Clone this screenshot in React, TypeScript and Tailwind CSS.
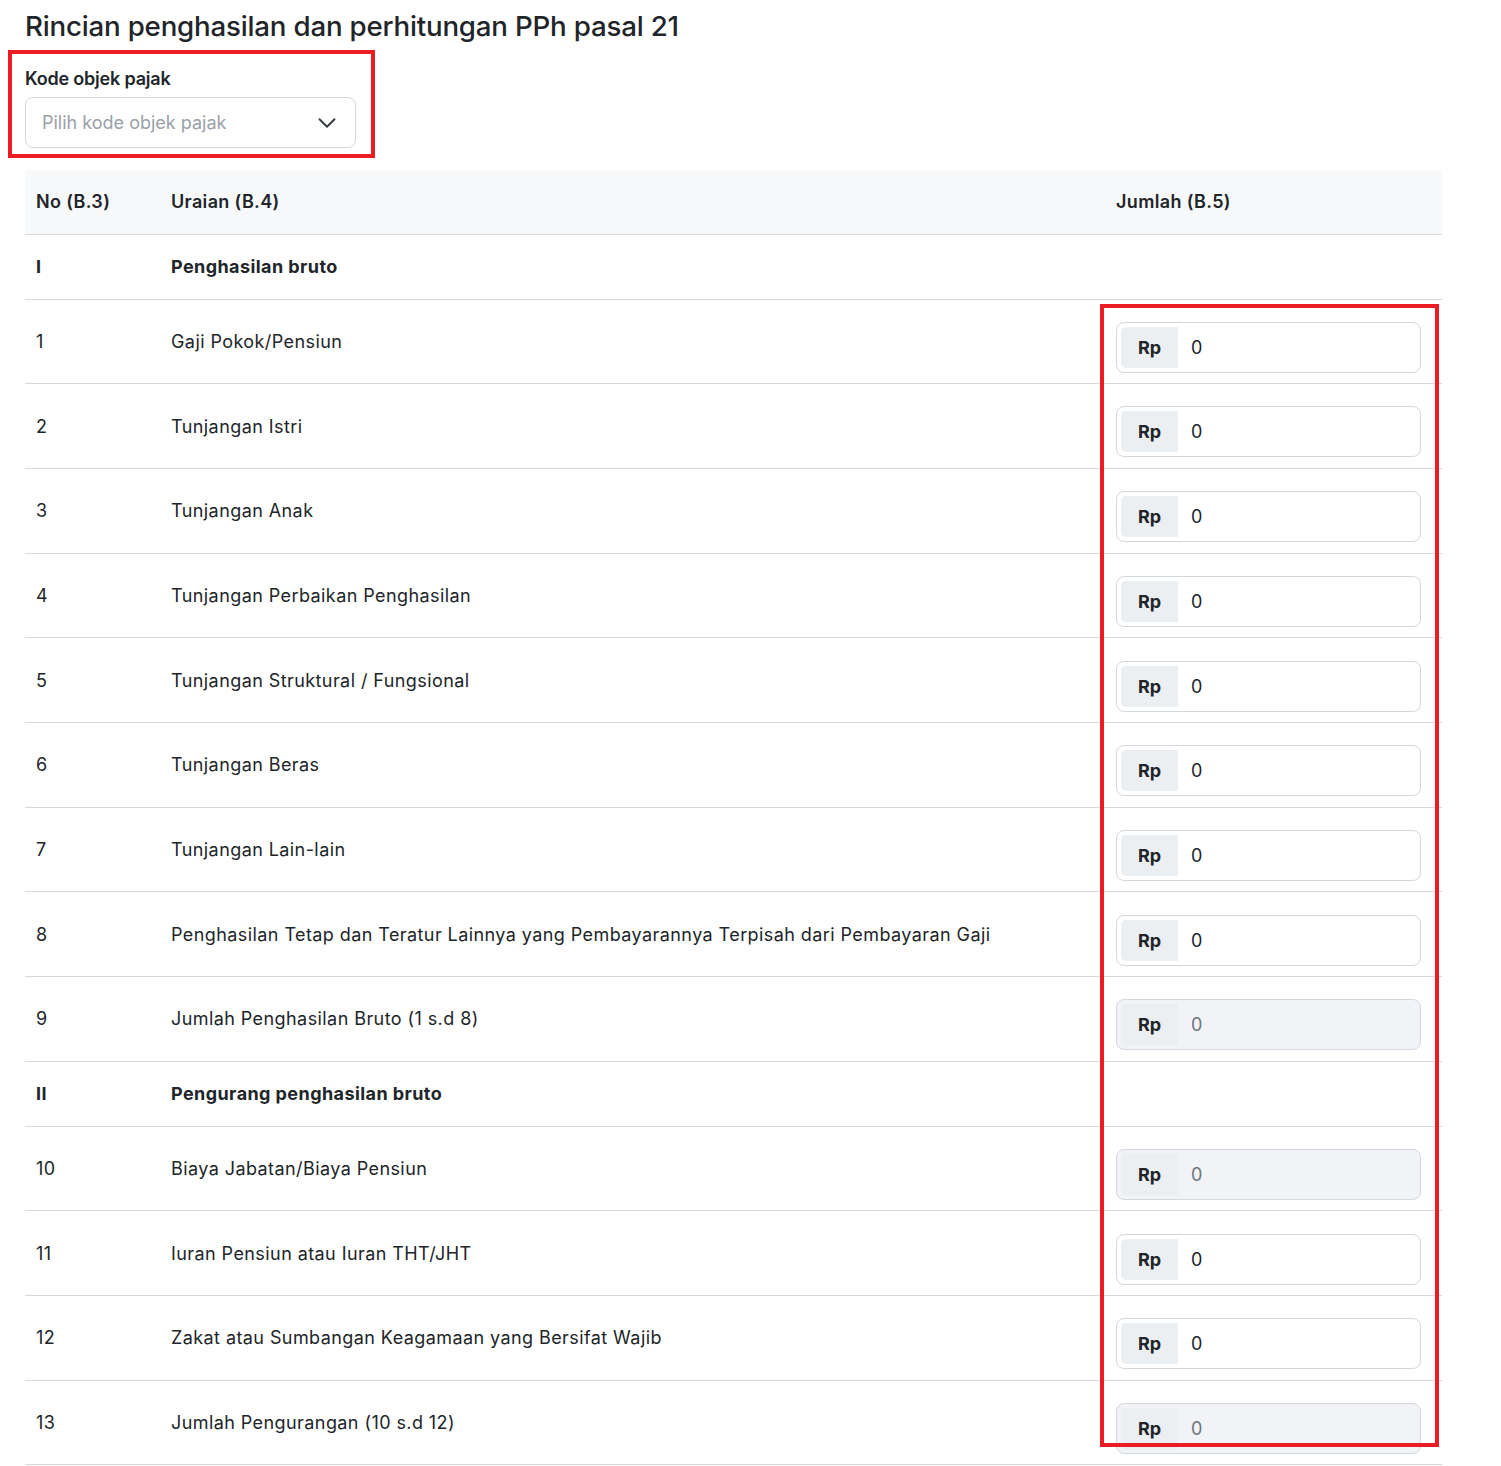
import { ChevronDown } from "lucide-react";

type Row =
  | { kind: "section"; no: string; label: string }
  | { kind: "item"; no: string; label: string; disabled?: boolean };

const rows: Row[] = [
  { kind: "section", no: "I", label: "Penghasilan bruto" },
  { kind: "item", no: "1", label: "Gaji Pokok/Pensiun" },
  { kind: "item", no: "2", label: "Tunjangan Istri" },
  { kind: "item", no: "3", label: "Tunjangan Anak" },
  { kind: "item", no: "4", label: "Tunjangan Perbaikan Penghasilan" },
  { kind: "item", no: "5", label: "Tunjangan Struktural / Fungsional" },
  { kind: "item", no: "6", label: "Tunjangan Beras" },
  { kind: "item", no: "7", label: "Tunjangan Lain-lain" },
  {
    kind: "item",
    no: "8",
    label:
      "Penghasilan Tetap dan Teratur Lainnya yang Pembayarannya Terpisah dari Pembayaran Gaji",
  },
  { kind: "item", no: "9", label: "Jumlah Penghasilan Bruto (1 s.d 8)", disabled: true },
  { kind: "section", no: "II", label: "Pengurang penghasilan bruto" },
  { kind: "item", no: "10", label: "Biaya Jabatan/Biaya Pensiun", disabled: true },
  { kind: "item", no: "11", label: "Iuran Pensiun atau Iuran THT/JHT" },
  { kind: "item", no: "12", label: "Zakat atau Sumbangan Keagamaan yang Bersifat Wajib" },
  { kind: "item", no: "13", label: "Jumlah Pengurangan (10 s.d 12)", disabled: true },
];

function RupiahInput({ disabled }: { disabled?: boolean }) {
  return (
    <div
      className={`w-[305px] h-[51px] rounded-lg border border-[#d4d8de] flex items-center p-[4px] ${
        disabled ? "bg-[#f1f3f6]" : "bg-white"
      }`}
    >
      <div className="w-[57px] h-[41px] rounded-l-[5px] bg-[#eceff2] flex items-center justify-center text-[18px] font-bold tracking-normal text-[#212529]">
        Rp
      </div>
      <span
        className={`ml-[13px] text-[18px] ${
          disabled ? "text-[#6c757d]" : "text-[#212529]"
        }`}
      >
        0
      </span>
    </div>
  );
}

export default function App() {
  return (
    <div
      className="w-[1501px] h-[1466px] overflow-hidden bg-white text-[#212529] px-[25px] pt-[8px]"
      style={{ fontFamily: "Inter, 'Noto Sans', sans-serif" }}
    >
      <h1 className="text-[27.7px] font-medium leading-[36px] tracking-[-0.2px]">
        Rincian penghasilan dan perhitungan PPh pasal 21
      </h1>

      {/* kotak merah sekitar field kode objek pajak */}
      <div className="-ml-[17px] mt-[6px] w-[367px] border-[4px] border-[#ec1c24] pl-[13px] pt-[13px] pb-[6px]">
        <div className="text-[18px] font-semibold leading-[24px] tracking-[-0.2px]">
          Kode objek pajak
        </div>
        <div className="mt-[6px] w-[331px] h-[51px] rounded-lg border border-[#d4d8de] flex items-center justify-between pl-[16px] pr-[13px]">
          <span className="text-[18px] text-[#9aa1a9]">Pilih kode objek pajak</span>
          <ChevronDown size={30} strokeWidth={1.5} className="text-[#343a40]" />
        </div>
      </div>

      <div className="relative mt-[12px] w-[1417px]">
        <table className="w-full border-collapse text-[18px] tracking-[0.42px]">
          <thead>
            <tr className="bg-[#f8f9fa] border-b border-[#d6dae0] h-[64px]">
              <th className="w-[135px] text-left font-semibold pl-[11px] tracking-[0.35px]">No (B.3)</th>
              <th className="text-left font-semibold pl-[11px] tracking-[0.35px]">Uraian (B.4)</th>
              <th className="w-[337px] text-left font-semibold pl-[11px] tracking-[0.35px]">Jumlah (B.5)</th>
            </tr>
          </thead>
          <tbody>
            {rows.map((r) =>
              r.kind === "section" ? (
                <tr key={r.no} className="border-b border-[#d6dae0] h-[65px]">
                  <td className="pl-[11px] font-bold">{r.no}</td>
                  <td className="pl-[11px] font-bold">{r.label}</td>
                  <td />
                </tr>
              ) : (
                <tr key={r.no} className="border-b border-[#d6dae0]">
                  <td className="pl-[11px] align-middle">{r.no}</td>
                  <td className="pl-[11px] align-middle">{r.label}</td>
                  <td className="pl-[11px] pt-[22.3px] pb-[10.4px]">
                    <RupiahInput disabled={r.disabled} />
                  </td>
                </tr>
              )
            )}
          </tbody>
        </table>
        {/* kotak merah sekitar kolom jumlah */}
        <div className="absolute left-[1075px] top-[134px] w-[339px] h-[1143px] border-[4px] border-[#ec1c24] pointer-events-none" />
      </div>
    </div>
  );
}
